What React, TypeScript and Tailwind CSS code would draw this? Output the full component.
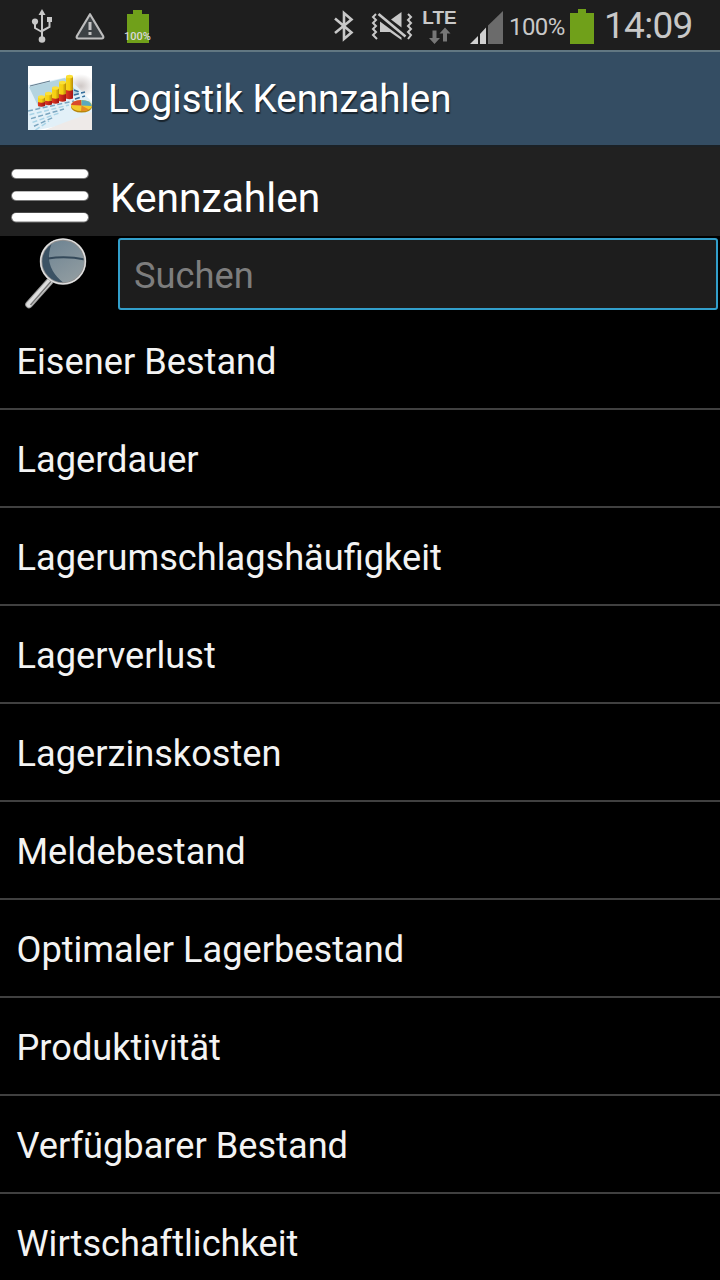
const items: string[] = [
  "Eisener Bestand",
  "Lagerdauer",
  "Lagerumschlagshäufigkeit",
  "Lagerverlust",
  "Lagerzinskosten",
  "Meldebestand",
  "Optimaler Lagerbestand",
  "Produktivität",
  "Verfügbarer Bestand",
  "Wirtschaftlichkeit",
];

function UsbIcon() {
  return (
    <svg width="24" height="36" viewBox="0 0 24 36" fill="none" stroke="#c8c8c8" strokeWidth="2">
      <path d="M12 31V6M5 14v6l7 4M19.500 13v6L12 23" />
      <path d="M12 1l3.500 6h-7z" fill="#c8c8c8" stroke="none" />
      <circle cx="12" cy="31.500" r="3.300" fill="#c8c8c8" stroke="none" />
      <circle cx="5" cy="13.500" r="3.100" fill="#c8c8c8" stroke="none" />
      <path d="M17 9h5v5h-5z" fill="#c8c8c8" stroke="none" />
    </svg>
  );
}

function WarningIcon() {
  return (
    <svg width="30" height="28" viewBox="0 0 30 28" fill="none">
      <path
        d="M15 2.200 28.200 24.300q.6 2.200-1.500 2.200H3.300q-2.100 0-1.500-2.200z"
        fill="#3c4144"
        stroke="#bdbdbd"
        strokeWidth="2.200"
        strokeLinejoin="round"
      />
      <path d="M13.500 10h3v8h-3zM13.500 20h3v3h-3z" fill="#c4c4c4" />
    </svg>
  );
}

function Battery() {
  return (
    <svg width="24" height="35" viewBox="0 0 24 35">
      <path d="M8 0h8v4h8v31H0V4h8z" fill="#70a01a" />
    </svg>
  );
}

function BluetoothIcon() {
  return (
    <svg width="20" height="32" viewBox="0 0 20 32" fill="none" stroke="#c8c8c8" strokeWidth="2.600">
      <path d="M1 8.500 17.500 22.500 10 29V3l7.500 6.500L1 23" />
    </svg>
  );
}

function MuteIcon() {
  return (
    <svg width="42" height="30" viewBox="0 0 42 30" fill="none">
      <path
        d="M5 2 2 5l3 3-3 3 3 3-3 3 3 3-3 3 4 4M37 2l3 3-3 3 3 3-3 3 3 3-3 3 3 3-3 4"
        stroke="#c8c8c8"
        strokeWidth="2"
      />
      <path d="M20 7.500 30.500 0v15.500z" fill="#c8c8c8" />
      <path d="M9 9.500 30.500 25.500V28L19 20H9z" fill="#c8c8c8" />
      <path d="M7.500 2 34.500 24.500" stroke="#c8c8c8" strokeWidth="2.600" />
    </svg>
  );
}

function DataArrows() {
  return (
    <svg width="22" height="18" viewBox="0 0 22 18" fill="#777">
      <path d="M3.500 3.500h4V11H11l-5.500 6L0 11h3.500z" />
      <path d="M14 14.500h4V6.500h3.500L16 .5l-5.500 6H14z" />
    </svg>
  );
}

function SignalIcon() {
  return (
    <svg width="33" height="33" viewBox="0 0 33 33">
      <path d="M0 33 8 25v8zM10 23l6-6.500V33h-6z" fill="#d0d0d0" />
      <path d="M18 14.500 33 0v33H18z" fill="#6b6b6b" />
    </svg>
  );
}

function StatusBar() {
  return (
    <div className="flex h-[50px] shrink-0 items-start bg-[#1e1e1e] text-[#c8c8c8]">
      <div className="ml-[30px] mt-2">
        <UsbIcon />
      </div>
      <div className="ml-[21px] mt-3">
        <WarningIcon />
      </div>
      <div className="relative ml-[22px] mt-2.5">
        <svg width="22" height="33" viewBox="0 0 22 33">
          <path d="M6 0h9v4h7v29H0V4h6z" fill="#70a01a" />
        </svg>
        <span className="absolute -left-[3px] top-[21px] text-[11px] leading-3 font-medium text-[#d8d8d8]">
          100%
        </span>
      </div>
      <div className="ml-auto flex items-start">
        <div className="mt-2.5">
          <BluetoothIcon />
        </div>
        <div className="ml-[17px] mt-3">
          <MuteIcon />
        </div>
        <div className="ml-2 mt-2 flex w-[37px] flex-col items-center">
          <span className="font-['Liberation_Sans'] text-[19px] leading-[19px] font-bold">LTE</span>
          <DataArrows />
        </div>
        <div className="ml-[12px] mt-[11px]">
          <SignalIcon />
        </div>
        <span className="ml-[6px] mt-[11px] w-[61px] text-[24px] leading-8 tracking-[-0.6px]">100%</span>
        <div className="mt-[9px]">
          <Battery />
        </div>
        <span className="ml-[10px] mr-[23px] mt-1 w-[93px] text-[37px] leading-[44px] tracking-[-0.7px]">
          14:09
        </span>
      </div>
    </div>
  );
}

function AppLogo() {
  const bars = [
    { x: 10, top: 31, mid: 36, bottom: 40 },
    { x: 17, top: 27.5, mid: 34.5, bottom: 38.5 },
    { x: 24, top: 22, mid: 32, bottom: 37 },
    { x: 31, top: 16.5, mid: 28, bottom: 35 },
    { x: 38, top: 10.5, mid: 24, bottom: 32.5 },
  ];
  const rows = [0, 1, 2, 3, 4, 5];
  return (
    <svg className="shrink-0" width="64" height="64" viewBox="0 0 64 64">
      <defs>
        <linearGradient id="gold" x1="0" x2="1" y1="0" y2="0">
          <stop offset="0" stopColor="#f7d61c" />
          <stop offset="0.500" stopColor="#f5cf10" />
          <stop offset="1" stopColor="#b58a08" />
        </linearGradient>
        <linearGradient id="red" x1="0" x2="1" y1="0" y2="0">
          <stop offset="0" stopColor="#e23a22" />
          <stop offset="1" stopColor="#a31414" />
        </linearGradient>
        <radialGradient id="haze">
          <stop offset="0" stopColor="#cfc8c6" />
          <stop offset="1" stopColor="#fff" />
        </radialGradient>
      </defs>
      <path d="M0 0h64v64H0z" fill="#fff" />
      <ellipse cx="53" cy="20" rx="14" ry="12" fill="url(#haze)" />
      <path d="M0 19 40 11l24 25v17L10 64H0z" fill="#e2f0f8" />
      <path d="M1 21 37 12l14 16-40 14z" fill="#b4d4e0" />
      <path d="M2 20 22 15" stroke="#627b8c" strokeWidth="1" />
      <path d="M64 46 17 64h47z" fill="#eeeae8" />
      <g fill="none" strokeWidth="1.500" strokeDasharray="5 2.500">
        {rows.map((i) => (
          <path
            key={i}
            d={`M${i * 1.5} ${45 + i * 3.8}L${46 - i * 5} ${35 + i * 4}`}
            stroke={i % 2 ? "#a9d3e6" : "#7ba6c0"}
          />
        ))}
        <path d="M46 24l8 3M46 29l11-3M47 33l10-3" stroke="#356f9c" />
      </g>
      {bars.map((b) => (
        <g key={b.x}>
          <path d={`M${b.x} ${b.mid}h7v${b.bottom - b.mid}q-3.500 1.500-7 0z`} fill="url(#red)" />
          <path d={`M${b.x} ${b.top}h7v${b.mid - b.top}q-3.500 1.500-7 0z`} fill="url(#gold)" />
          <ellipse cx={b.x + 3.5} cy={b.top} rx="3.500" ry="1.800" fill="#fbe03a" />
        </g>
      ))}
      <ellipse cx="53.500" cy="41" rx="10.500" ry="5.500" fill="#b8860b" />
      <ellipse cx="53.500" cy="39.500" rx="10.500" ry="5.500" fill="#f2cc2d" />
      <path d="M53.500 39.500 43 39q1-4.500 10-5z" fill="#d94a2b" />
      <path d="M53.500 39.500V34q9 0 10.500 6z" fill="#5ba9c0" />
      <path d="M53.500 39.500 61 43.500q-3 2-8 1.500z" fill="#e58a25" />
    </svg>
  );
}

function MenuIcon() {
  return (
    <svg width="80" height="60" viewBox="0 0 80 60">
      <g fill="#777">
        <rect x="1" y="3" width="78" height="10" rx="5" />
        <rect x="1" y="25" width="78" height="10" rx="5" />
        <rect x="1" y="46.500" width="78" height="10" rx="5" />
      </g>
      <g fill="#fff">
        <rect x="2" y="3.500" width="76" height="8.500" rx="4.200" />
        <rect x="2" y="25.500" width="76" height="8.500" rx="4.200" />
        <rect x="2" y="47" width="76" height="8.500" rx="4.200" />
      </g>
    </svg>
  );
}

function MagnifierIcon() {
  return (
    <svg width="64" height="74" viewBox="0 0 64 74">
      <defs>
        <linearGradient id="glass" x1="0" x2="0.600" y1="0" y2="1">
          <stop offset="0" stopColor="#6a8191" />
          <stop offset="1" stopColor="#8f9ba0" />
        </linearGradient>
        <clipPath id="lens">
          <circle cx="39" cy="25.500" r="21.500" />
        </clipPath>
      </defs>
      <path d="M26 45 5 68.500" stroke="#999" strokeWidth="7.500" strokeLinecap="round" />
      <path d="M26 45 5 68.500" stroke="#dedede" strokeWidth="5.500" strokeLinecap="round" />
      <path d="M27 45.500 6.500 69" stroke="#777" strokeWidth="1.500" />
      <circle cx="39" cy="25.500" r="21.500" fill="url(#glass)" />
      <g clipPath="url(#lens)">
        <path d="M15 0h17q-7 10-7 21 0 15 16 27H15z" fill="#3b5264" />
        <path d="M24 22.500q18-3 37 1" fill="none" stroke="#34495a" strokeWidth="2" />
      </g>
      <circle cx="39" cy="25.500" r="22" fill="none" stroke="#939393" strokeWidth="2.500" />
      <circle cx="39" cy="25.500" r="22.300" fill="none" stroke="#e3e3e3" strokeWidth="1.300" />
    </svg>
  );
}

export default function App() {
  return (
    <div className="flex h-[1280px] w-[720px] flex-col overflow-hidden bg-black font-[Roboto,sans-serif] text-white">
      <StatusBar />
      {/* title bar */}
      <header className="flex h-[95px] shrink-0 items-center border-t-2 border-[#617782] bg-[#344d63] pl-7 pb-px">
        <AppLogo />
        <h1 className="ml-[16px] pt-0.5 text-[38.500px] leading-[44px] [text-shadow:1px_2px_1px_#0008]">
          Logistik Kennzahlen
        </h1>
      </header>
      <div className="flex h-[91px] shrink-0 items-start border-t-2 border-[#1b2126] bg-[#212121] pl-2.5">
        <button className="mt-[19px]" aria-label="Menü">
          <MenuIcon />
        </button>
        <h2 className="ml-5 mt-[29px] text-[40.700px] leading-[44px]">Kennzahlen</h2>
      </div>
      {/* search */}
      <div className="flex h-[76px] shrink-0 items-start pr-0.5">
        <div className="ml-6 w-[94px]">
          <MagnifierIcon />
        </div>
        <input
          className="mt-0.5 h-[72px] min-w-0 flex-1 rounded-[3px] border-2 border-[#329fcb] bg-[#1d1d1d] px-3.5 pt-0.5 text-[36.300px] outline-none placeholder:text-[#7d7d7d]"
          placeholder="Suchen"
        />
      </div>
      <ul className="shrink-0">
        {items.map((item) => (
          <li
            key={item}
            className="flex h-[98px] items-center border-b-2 border-[#404040] pl-[16.500px] pt-1 text-[36.200px] text-[#f3f3f3]"
          >
            {item}
          </li>
        ))}
      </ul>
    </div>
  );
}
